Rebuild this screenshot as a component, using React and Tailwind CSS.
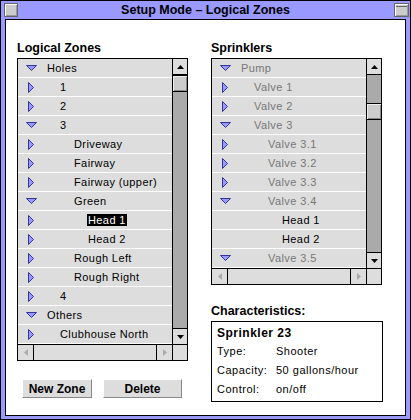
import React from 'react'

const zones = [
  { label: 'Holes', level: 0, open: true },
  { label: '1', level: 1 },
  { label: '2', level: 1 },
  { label: '3', level: 1, open: true },
  { label: 'Driveway', level: 2 },
  { label: 'Fairway', level: 2 },
  { label: 'Fairway (upper)', level: 2 },
  { label: 'Green', level: 2, open: true },
  { label: 'Head 1', level: 3, selected: true },
  { label: 'Head 2', level: 3 },
  { label: 'Rough Left', level: 2 },
  { label: 'Rough Right', level: 2 },
  { label: '4', level: 1 },
  { label: 'Others', level: 0, open: true },
  { label: 'Clubhouse North', level: 1 },
]

const sprinklers = [
  { label: 'Pump', level: 0, open: true, dim: true },
  { label: 'Valve 1', level: 1, dim: true },
  { label: 'Valve 2', level: 1, dim: true },
  { label: 'Valve 3', level: 1, open: true, dim: true },
  { label: 'Valve 3.1', level: 2, dim: true },
  { label: 'Valve 3.2', level: 2, dim: true },
  { label: 'Valve 3.3', level: 2, dim: true },
  { label: 'Valve 3.4', level: 2, open: true, dim: true },
  { label: 'Head 1', level: 3, leaf: true },
  { label: 'Head 2', level: 3, leaf: true },
  { label: 'Valve 3.5', level: 2, open: true, dim: true },
]

// text offset after the 26px triangle slot
const indent = ['ml-[3px]', 'ml-[16px]', 'ml-[30px]', 'ml-[44px]']

const Disclosure = ({ open }) =>
  open ? (
    <svg width="11" height="6" viewBox="0 0 11 6">
      <polygon points="0.5,0.5 10.5,0.5 5.5,5.5" fill="#9999ff" stroke="#333399" strokeWidth="1" />
    </svg>
  ) : (
    <svg width="6" height="11" viewBox="0 0 6 11">
      <polygon points="0.5,0.5 5.5,5.5 0.5,10.5" fill="#9999ff" stroke="#333399" strokeWidth="1" />
    </svg>
  )

const Arrow = ({ dir, color = '#000' }) => {
  const pts = {
    up: '0,4 7,4 3.5,0',
    down: '0,0 7,0 3.5,4',
    left: '4,0 4,7 0,3.5',
    right: '0,0 0,7 4,3.5',
  }[dir]
  const vert = dir === 'up' || dir === 'down'
  return (
    <svg width={vert ? 7 : 4} height={vert ? 4 : 7} viewBox={vert ? '0 0 7 4' : '0 0 4 7'}>
      <polygon points={pts} fill={color} />
    </svg>
  )
}

const TreeList = ({ items, thumbTop }) => (
  <div className="w-[171px] border border-black flex flex-col">
    <div className="flex">
      <div className="flex-1 min-w-0 flex flex-col">
        {items.map((item, i) => (
          <div key={i} className="h-[19px] bg-[#dddddd] border-b border-white flex items-center whitespace-nowrap overflow-hidden">
            <div className="w-[26px] shrink-0 flex justify-center">
              {!item.leaf && <Disclosure open={item.open} />}
            </div>
            <span
              className={`${indent[item.level]} text-[11px] leading-[12px] tracking-[0.4px] ${
                item.selected ? 'bg-black text-white px-[1px] -translate-x-[1px]' : item.dim ? 'text-[#777777]' : 'text-black'
              }`}
            >
              {item.label}
            </span>
          </div>
        ))}
      </div>
      <div className="w-[15px] shrink-0 border-l border-black bg-[#aaaaaa] flex flex-col">
        <div className="h-[16px] bg-[#dddddd] border-b border-black flex items-center justify-center">
          <Arrow dir="up" />
        </div>
        <div className={`${thumbTop} h-[17px] bg-[#cccccc] border-y border-black shadow-[inset_1px_1px_0_#eeeeee,inset_-1px_-1px_0_#888888]`} />
        <div className="flex-1" />
        <div className="h-[16px] bg-[#dddddd] border-t border-black flex items-center justify-center">
          <Arrow dir="down" />
        </div>
      </div>
    </div>
    <div className="h-[16px] border-t border-black flex bg-[#dddddd]">
      <div className="w-[16px] border-r border-black flex items-center justify-center">
        <Arrow dir="left" color="#aaaaaa" />
      </div>
      <div className="flex-1" />
      <div className="w-[16px] border-l border-black flex items-center justify-center">
        <Arrow dir="right" color="#aaaaaa" />
      </div>
      <div className="w-[15px] border-l border-black" />
    </div>
  </div>
)

const Button = ({ children, width }) => (
  <div
    className={`${width} h-[19px] bg-[#dddddd] border-t border-l border-white border-r border-b border-r-[#888888] border-b-[#888888] flex items-center justify-center text-[12px] font-bold text-black`}
  >
    {children}
  </div>
)

const Heading = ({ children }) => (
  <div className="h-[16px] mb-[2px] text-[12.5px] leading-[16px] font-bold text-black">{children}</div>
)

export default function App() {
  return (
    <div className="w-[411px] h-[420px] bg-[#9999ff] border border-black flex flex-col font-['Liberation_Sans',sans-serif]">
      {/* title bar */}
      <div className="h-[18px] relative flex items-center justify-center">
        <div className="absolute left-[3px] top-[2px] w-[14px] h-[14px] bg-[#cccccc] border border-[#666666] shadow-[inset_1px_1px_0_#ffffff,inset_-1px_-1px_0_#999999]" />
        <span className="text-[12.5px] font-bold text-black leading-[16px]">Setup Mode – Logical Zones</span>
        <div className="absolute right-[1px] top-[2px] w-[15px] h-[14px] bg-[#cccccc] border border-[#666666] shadow-[inset_1px_1px_0_#ffffff,inset_-1px_-1px_0_#999999] flex flex-col">
          <div className="mt-[2px] h-[1px] mx-[1px] bg-[#666666]" />
        </div>
      </div>

      {/* content */}
      <div className="flex-1 mx-[4px] mb-[3px] bg-white border border-black pt-[20px] pl-[11px] flex gap-[23px]">
        <div className="flex flex-col">
          <Heading>Logical Zones</Heading>
          <TreeList items={zones} thumbTop="mt-0" />
          <div className="flex gap-[11px] mt-[18px] ml-[5px]">
            <Button width="w-[70px]">New Zone</Button>
            <Button width="w-[79px]">Delete</Button>
          </div>
        </div>

        <div className="flex flex-col">
          <Heading>Sprinklers</Heading>
          <TreeList items={sprinklers} thumbTop="mt-[28px]" />
          <div className="mt-[18px]">
            <Heading>Characteristics:</Heading>
          </div>
          <div className="w-[172px] border border-black pt-[1px] pb-[2px] pl-[5px] text-[11px] tracking-[0.5px] text-black">
            <div className="h-[19px] flex items-center font-bold text-[12px]">Sprinkler 23</div>
            <div className="h-[19px] flex items-center">
              <span className="w-[59px]">Type:</span>
              <span>Shooter</span>
            </div>
            <div className="h-[19px] flex items-center">
              <span className="w-[59px]">Capacity:</span>
              <span>50 gallons/hour</span>
            </div>
            <div className="h-[19px] flex items-center">
              <span className="w-[59px]">Control:</span>
              <span>on/off</span>
            </div>
          </div>
        </div>
      </div>
    </div>
  )
}
